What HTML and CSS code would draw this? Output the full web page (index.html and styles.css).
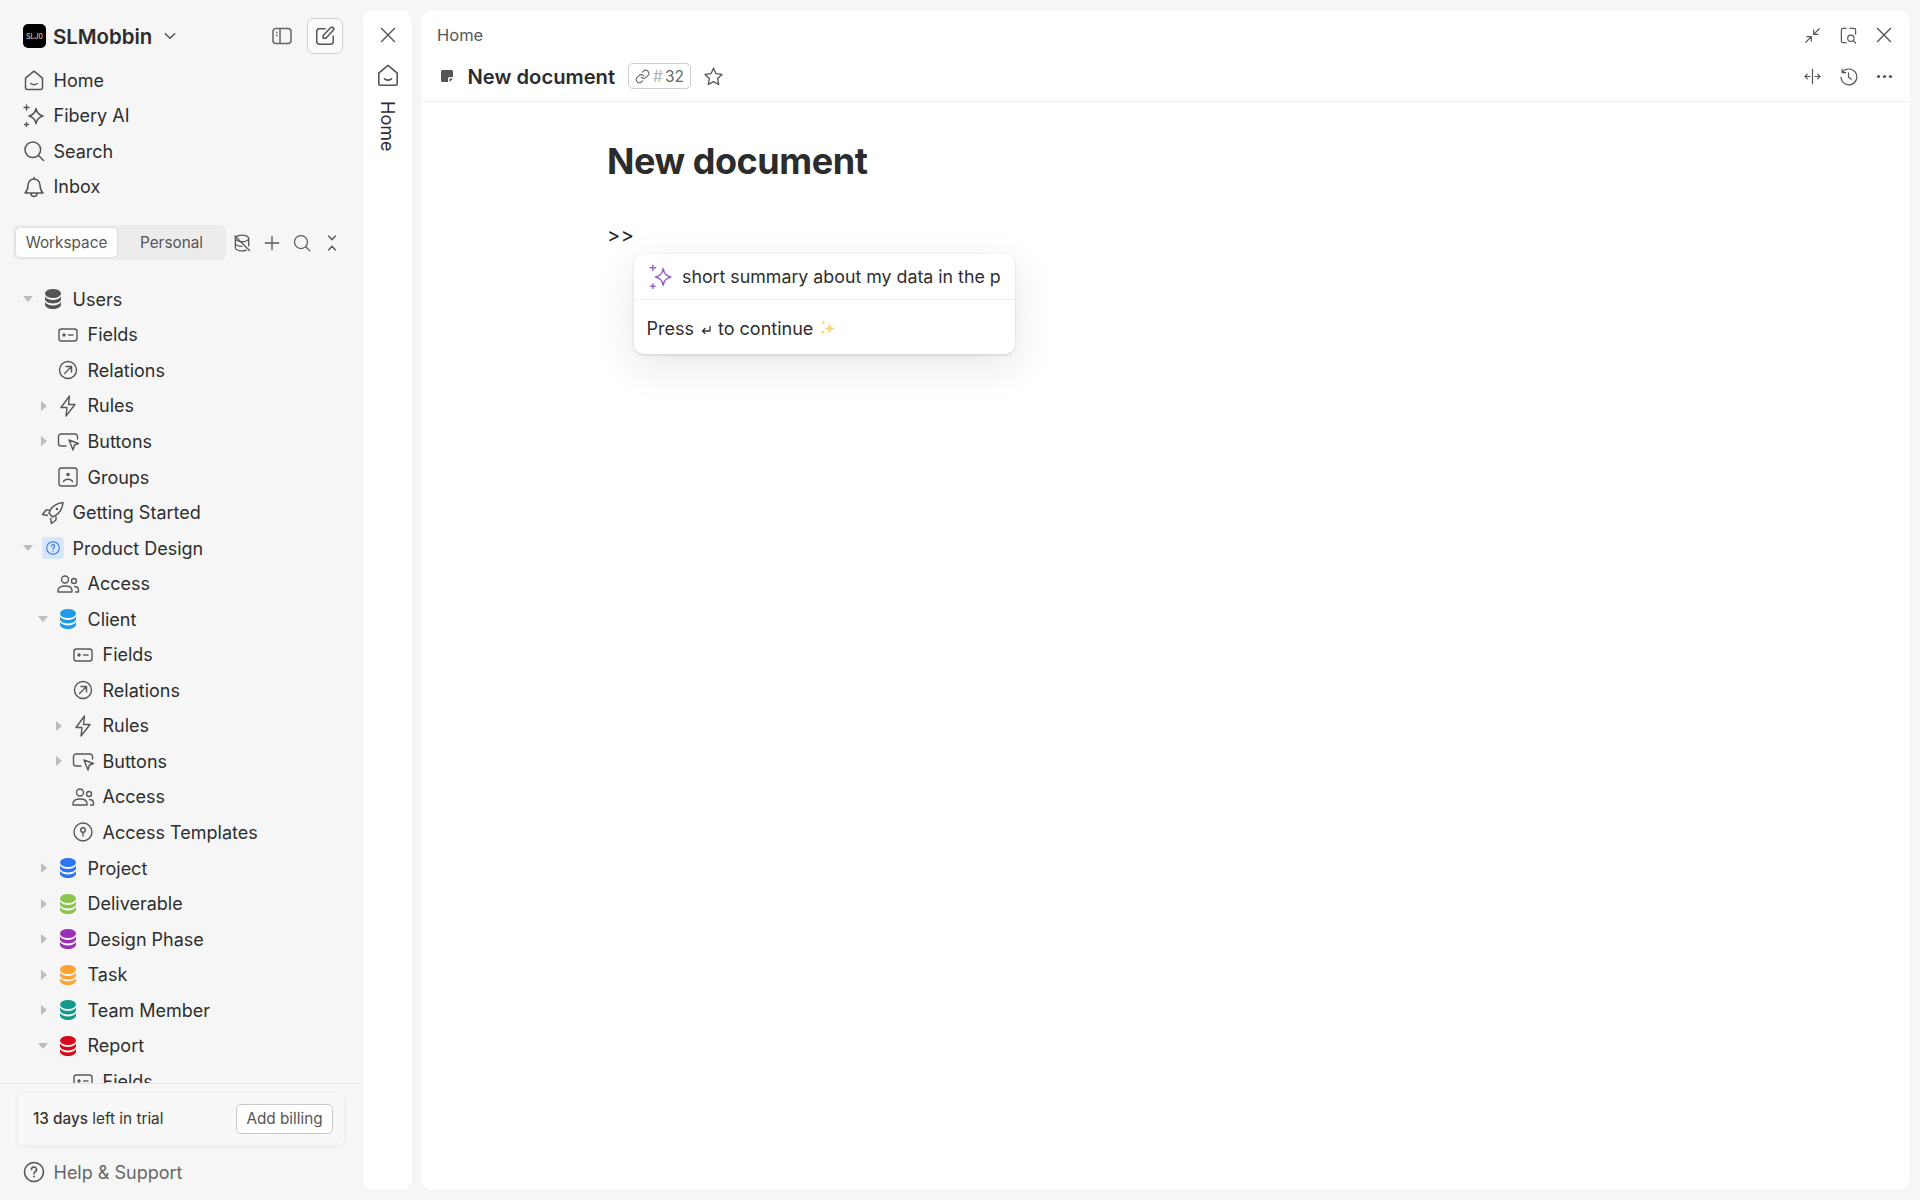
FILE: index.html
```html
<!DOCTYPE html>
<html lang="en">
<head>
<meta charset="utf-8">
<title>New document</title>
<link rel="stylesheet" href="styles.css">
</head>
<body>
<svg class="defs" xmlns="http://www.w3.org/2000/svg">
  <symbol id="i-home" viewBox="0 0 24 24"><path d="M3.500 10.200 12 3.200l8.500 7v9.300a2 2 0 0 1-2 2h-13a2 2 0 0 1-2-2z" fill="none" stroke="currentColor" stroke-width="1.500" stroke-linejoin="round"/><path d="M8.800 15.500c1.800 1.400 4.600 1.400 6.400 0" fill="none" stroke="currentColor" stroke-width="1.500" stroke-linecap="round"/></symbol>
  <symbol id="i-ai" viewBox="0 0 24 24"><path d="M14 4.500c.8 4.500 2.500 6.200 7 7.500-4.500 1.300-6.200 3-7 7.500-.8-4.500-2.500-6.200-7-7.500 4.500-1.300 6.200-3 7-7.500z" fill="none" stroke="currentColor" stroke-width="1.500" stroke-linejoin="round"/><path d="M4.500 1v5M2 3.500h5M4.500 18.500v4M2.500 20.500h4" stroke="currentColor" stroke-width="1.300" stroke-linecap="round"/></symbol>
  <symbol id="i-search" viewBox="0 0 24 24"><circle cx="10.800" cy="10.800" r="7.800" fill="none" stroke="currentColor" stroke-width="1.500"/><path d="m16.500 16.500 5 5" stroke="currentColor" stroke-width="1.500" stroke-linecap="round"/></symbol>
  <symbol id="i-bell" viewBox="0 0 24 24"><path d="M6 10a6 6 0 0 1 12 0c0 4 1 6 3 8H3c2-2 3-4 3-8zM12 2.500V4M9 18.500c0 4 6 4 6 0" fill="none" stroke="currentColor" stroke-width="1.500" stroke-linejoin="round" stroke-linecap="round"/></symbol>
  <symbol id="i-chev" viewBox="0 0 12 12"><path d="m2 4 4 4 4-4" fill="none" stroke="currentColor" stroke-width="1.300" stroke-linecap="round" stroke-linejoin="round"/></symbol>
  <symbol id="i-panel" viewBox="0 0 24 24"><rect x="3" y="4.500" width="18" height="15" rx="3" fill="none" stroke="currentColor" stroke-width="1.500"/><path d="M10 4.500v15" stroke="currentColor" stroke-width="1.500"/><path d="M6 8.500h1.500M6 11.500h1.500" stroke="currentColor" stroke-width="1.500"/></symbol>
  <symbol id="i-edit" viewBox="0 0 24 24"><path d="M12 4H6a3 3 0 0 0-3 3v11a3 3 0 0 0 3 3h12a3 3 0 0 0 3-3v-6" fill="none" stroke="currentColor" stroke-width="1.600" stroke-linecap="round"/><path d="M10 14.500v-3l8-8.500a1.800 1.800 0 0 1 3 2.800l-8 8.700z" fill="none" stroke="currentColor" stroke-width="1.600" stroke-linejoin="round"/></symbol>
  <symbol id="i-x" viewBox="0 0 24 24"><path d="m5 5 14 14M19 5 5 19" stroke="currentColor" stroke-width="1.500" stroke-linecap="round"/></symbol>
  <symbol id="i-dboff" viewBox="0 0 24 24"><ellipse cx="12" cy="6.500" rx="8" ry="4" fill="none" stroke="currentColor" stroke-width="1.600"/><path d="M4 6.500v11c0 2.300 3.600 4 8 4 2 0 3.800-.3 5-1M20 6.500v9M4 12c0 2.300 3.600 4 8 4M3.500 3.500l17.500 17.500" fill="none" stroke="currentColor" stroke-width="1.600" stroke-linecap="round"/></symbol>
  <symbol id="i-plus" viewBox="0 0 24 24"><path d="M12 4v16M4 12h16" stroke="currentColor" stroke-width="1.600" stroke-linecap="round"/></symbol>
  <symbol id="i-collapse" viewBox="0 0 24 24"><path d="m8 3.500 4 4.500 4-4.500M8 20.500 12 16l4 4.500" fill="none" stroke="currentColor" stroke-width="1.700" stroke-linecap="round" stroke-linejoin="round"/></symbol>
  <symbol id="i-db" viewBox="0 0 24 24"><ellipse cx="12" cy="6.500" rx="8" ry="4.500" fill="currentColor"/><path d="M4 9.500v2.600c0 2.500 3.600 4.400 8 4.400s8-1.900 8-4.400V9.500c-1.300 2.300-4.300 3.400-8 3.400s-6.700-1.100-8-3.400z" fill="currentColor"/><path d="M4 15v2.500c0 2.500 3.600 4.500 8 4.500s8-2 8-4.500V15c-1.300 2.300-4.300 3.400-8 3.400S5.300 17.300 4 15z" fill="currentColor"/></symbol>
  <symbol id="i-fields" viewBox="0 0 24 24"><rect x="3" y="6" width="18" height="12" rx="2.500" fill="none" stroke="currentColor" stroke-width="1.400"/><circle cx="8" cy="12" r="1.700" fill="currentColor"/><path d="M12 12h5.500" stroke="currentColor" stroke-width="1.400"/></symbol>
  <symbol id="i-rel" viewBox="0 0 24 24"><circle cx="12" cy="12" r="8.500" fill="none" stroke="currentColor" stroke-width="1.400"/><path d="m8.500 15.500 7-7M10 8.500h5.500V14" fill="none" stroke="currentColor" stroke-width="1.400" stroke-linecap="round" stroke-linejoin="round"/></symbol>
  <symbol id="i-bolt" viewBox="0 0 24 24"><path d="M13.500 2 5 13.500h6L10 22l9-11.500h-6.500z" fill="none" stroke="currentColor" stroke-width="1.400" stroke-linejoin="round"/></symbol>
  <symbol id="i-btn" viewBox="0 0 24 24"><path d="M10 17H5a2.500 2.500 0 0 1-2.500-2.500v-7A2.500 2.500 0 0 1 5 5h14a2.500 2.500 0 0 1 2.500 2.500V10" fill="none" stroke="currentColor" stroke-width="1.400" stroke-linecap="round"/><path d="m13 11 9.500 3.500-4 1.500-1.500 5z" fill="none" stroke="currentColor" stroke-width="1.400" stroke-linejoin="round"/></symbol>
  <symbol id="i-group" viewBox="0 0 24 24"><rect x="3" y="3" width="18" height="18" rx="2.500" fill="none" stroke="currentColor" stroke-width="1.400"/><circle cx="12" cy="9.500" r="1.800" fill="currentColor"/><path d="M7.500 16.500c1.500-3 7.500-3 9 0" fill="none" stroke="currentColor" stroke-width="1.400" stroke-linecap="round"/></symbol>
  <symbol id="i-rocket" viewBox="0 0 24 24"><path d="M8 12c2-6 6-9.500 14-10.500-.8 8-4 12-10.500 14.500z" fill="none" stroke="currentColor" stroke-width="1.500" stroke-linejoin="round"/><path d="M8.500 9H5L1.500 13.500 7 14.500M15 15.500V19l-4.500 3.500L9.500 17" fill="none" stroke="currentColor" stroke-width="1.500" stroke-linejoin="round"/><circle cx="16" cy="8" r="1.300" fill="currentColor"/></symbol>
  <symbol id="i-q" viewBox="0 0 24 24"><circle cx="12" cy="12" r="9.500" fill="none" stroke="currentColor" stroke-width="1.600"/><path d="M9.500 9.500a2.500 2.500 0 1 1 3.700 2.200c-.8.500-1.200 1-1.200 2" fill="none" stroke="currentColor" stroke-width="1.600" stroke-linecap="round"/><circle cx="12" cy="16.600" r="1" fill="currentColor"/></symbol>
  <symbol id="i-users" viewBox="0 0 24 24"><circle cx="9" cy="7.500" r="3.500" fill="none" stroke="currentColor" stroke-width="1.400"/><circle cx="18" cy="9" r="2.500" fill="none" stroke="currentColor" stroke-width="1.400"/><path d="M2 20v-1.500c0-3 3-4.500 7-4.500s7 1.500 7 4.500V20zM18 14.500c2.500 0 4.500 1.200 4.500 3.500v2H19" fill="none" stroke="currentColor" stroke-width="1.400" stroke-linejoin="round"/></symbol>
  <symbol id="i-tmpl" viewBox="0 0 24 24"><circle cx="12" cy="12" r="9" fill="none" stroke="currentColor" stroke-width="1.400"/><circle cx="12" cy="10" r="2.300" fill="none" stroke="currentColor" stroke-width="1.400"/><path d="M12 12.500V16" stroke="currentColor" stroke-width="1.400" stroke-linecap="round"/></symbol>
  <symbol id="i-doc" viewBox="0 0 14 14"><path d="M2.500 1h9A1.500 1.500 0 0 1 13 2.500V8H9.500A1.500 1.500 0 0 0 8 9.500V13H2.500A1.500 1.500 0 0 1 1 11.500v-9A1.500 1.500 0 0 1 2.500 1zM9.500 13V9.500H13z" fill="currentColor"/></symbol>
  <symbol id="i-link" viewBox="0 0 24 24"><path d="M10 13a5 5 0 0 0 7.540.54l3-3a5 5 0 0 0-7.070-7.070l-1.720 1.710M14 11a5 5 0 0 0-7.540-.54l-3 3a5 5 0 0 0 7.070 7.070l1.710-1.710" fill="none" stroke="currentColor" stroke-width="1.700" stroke-linecap="round" stroke-linejoin="round"/></symbol>
  <symbol id="i-star" viewBox="0 0 24 24"><path d="m12 2.500 2.900 6.300 6.800.8-5 4.700 1.300 6.900-6-3.400-6 3.400 1.300-6.900-5-4.700 6.800-.8z" fill="none" stroke="currentColor" stroke-width="1.500" stroke-linejoin="round"/></symbol>
  <symbol id="i-shrink" viewBox="0 0 24 24"><path d="m3.500 20.500 6.500-6.500M5 13.500h5.500V19M20.500 3.500 14 10M19 10.500h-5.500V5" fill="none" stroke="currentColor" stroke-width="1.500" stroke-linecap="round" stroke-linejoin="round"/></symbol>
  <symbol id="i-find" viewBox="0 0 24 24"><path d="M9 3H5a2 2 0 0 0-2 2v14a2 2 0 0 0 2 2h4M14 3h5a2 2 0 0 1 2 2v5" fill="none" stroke="currentColor" stroke-width="1.500" stroke-linecap="round"/><circle cx="15" cy="15.500" r="4" fill="none" stroke="currentColor" stroke-width="1.500"/><path d="m18 18.500 3 3" stroke="currentColor" stroke-width="1.500" stroke-linecap="round"/></symbol>
  <symbol id="i-split" viewBox="0 0 24 24"><path d="M12 3v18M9 12H2.500M5.500 9l-3 3 3 3M15 12h6.500M18.500 9l3 3-3 3" fill="none" stroke="currentColor" stroke-width="1.500" stroke-linecap="round" stroke-linejoin="round"/></symbol>
  <symbol id="i-hist" viewBox="0 0 24 24"><path d="M4.500 6.500A10 10 0 1 1 2.500 13M4 2.500v4.500h4.500" fill="none" stroke="currentColor" stroke-width="1.500" stroke-linecap="round" stroke-linejoin="round"/><path d="M12 7.500V13l3.500 2.500" fill="none" stroke="currentColor" stroke-width="1.500" stroke-linecap="round" stroke-linejoin="round"/></symbol>
  <symbol id="i-dots" viewBox="0 0 24 24"><circle cx="4.500" cy="12" r="2" fill="currentColor"/><circle cx="12" cy="12" r="2" fill="currentColor"/><circle cx="19.500" cy="12" r="2" fill="currentColor"/></symbol>
  <symbol id="i-ret" viewBox="0 0 12 12"><path d="M10 2.500V7H2.500M5 4.500 2.500 7 5 9.500" fill="none" stroke="currentColor" stroke-width="1.300" stroke-linecap="round" stroke-linejoin="round"/></symbol>
  <symbol id="i-glint" viewBox="0 0 16 16"><path d="M9.500 3c.5 3.500 1.700 4.700 5.500 5.500-3.800.8-5 2-5.500 5.500-.5-3.500-1.700-4.700-5.500-5.500C7.800 7.700 9 6.500 9.500 3z" fill="#f9dc7a"/><path d="M3.500 9.500c.2 1.500.8 2 2 2.300-1.200.3-1.800.8-2 2.200-.2-1.400-.8-1.900-2-2.200 1.200-.3 1.800-.8 2-2.300zM4 1c.2 1.200.6 1.700 1.700 2C4.600 3.300 4.200 3.800 4 5c-.2-1.200-.6-1.700-1.700-2C3.400 2.700 3.800 2.200 4 1z" fill="#f4cf68"/></symbol>
</svg>

<div class="app">
  <aside class="sidebar">
    <header class="brand">
      <span class="logo">SLJ0</span>
      <span class="brand-name">SLMobbin</span>
      <svg class="ic-chev"><use href="#i-chev"/></svg>
      <span class="spacer"></span>
      <svg class="ic-panel"><use href="#i-panel"/></svg>
      <button class="edit"><svg class="ic-edit"><use href="#i-edit"/></svg></button>
    </header>

    <nav class="nav">
      <a class="nav-row"><svg class="nav-ic"><use href="#i-home"/></svg>Home</a>
      <a class="nav-row"><svg class="nav-ic"><use href="#i-ai"/></svg>Fibery AI</a>
      <a class="nav-row"><svg class="nav-ic"><use href="#i-search"/></svg>Search</a>
      <a class="nav-row"><svg class="nav-ic"><use href="#i-bell"/></svg>Inbox</a>
    </nav>

    <div class="tabs-bar">
      <div class="tabs"><span class="tab active">Workspace</span><span class="tab">Personal</span></div>
      <svg class="tool"><use href="#i-dboff"/></svg>
      <svg class="tool"><use href="#i-plus"/></svg>
      <svg class="tool"><use href="#i-search"/></svg>
      <svg class="tool"><use href="#i-collapse"/></svg>
    </div>

    <div class="tree">
      <div class="row l0"><i class="caret down"></i><svg class="ti c-grey"><use href="#i-db"/></svg>Users</div>
      <div class="row l1"><i class="caret"></i><svg class="ti"><use href="#i-fields"/></svg>Fields</div>
      <div class="row l1"><i class="caret"></i><svg class="ti"><use href="#i-rel"/></svg>Relations</div>
      <div class="row l1"><i class="caret right"></i><svg class="ti"><use href="#i-bolt"/></svg>Rules</div>
      <div class="row l1"><i class="caret right"></i><svg class="ti"><use href="#i-btn"/></svg>Buttons</div>
      <div class="row l1"><i class="caret"></i><svg class="ti"><use href="#i-group"/></svg>Groups</div>
      <div class="row l0"><i class="caret"></i><svg class="ti"><use href="#i-rocket"/></svg>Getting Started</div>
      <div class="row l0"><i class="caret down"></i><span class="ti-box"><svg class="ti-q"><use href="#i-q"/></svg></span>Product Design</div>
      <div class="row l1"><i class="caret"></i><svg class="ti"><use href="#i-users"/></svg>Access</div>
      <div class="row l1"><i class="caret down"></i><svg class="ti c-client"><use href="#i-db"/></svg>Client</div>
      <div class="row l2"><i class="caret"></i><svg class="ti"><use href="#i-fields"/></svg>Fields</div>
      <div class="row l2"><i class="caret"></i><svg class="ti"><use href="#i-rel"/></svg>Relations</div>
      <div class="row l2"><i class="caret right"></i><svg class="ti"><use href="#i-bolt"/></svg>Rules</div>
      <div class="row l2"><i class="caret right"></i><svg class="ti"><use href="#i-btn"/></svg>Buttons</div>
      <div class="row l2"><i class="caret"></i><svg class="ti"><use href="#i-users"/></svg>Access</div>
      <div class="row l2"><i class="caret"></i><svg class="ti"><use href="#i-tmpl"/></svg>Access Templates</div>
      <div class="row l1"><i class="caret right"></i><svg class="ti c-project"><use href="#i-db"/></svg>Project</div>
      <div class="row l1"><i class="caret right"></i><svg class="ti c-deliv"><use href="#i-db"/></svg>Deliverable</div>
      <div class="row l1"><i class="caret right"></i><svg class="ti c-phase"><use href="#i-db"/></svg>Design Phase</div>
      <div class="row l1"><i class="caret right"></i><svg class="ti c-task"><use href="#i-db"/></svg>Task</div>
      <div class="row l1"><i class="caret right"></i><svg class="ti c-team"><use href="#i-db"/></svg>Team Member</div>
      <div class="row l1"><i class="caret down"></i><svg class="ti c-report"><use href="#i-db"/></svg>Report</div>
      <div class="row l2"><i class="caret"></i><svg class="ti"><use href="#i-fields"/></svg>Fields</div>
    </div>

    <footer class="foot">
      <div class="trial">
        <span class="trial-text"><b>13 days</b> left in trial</span>
        <button class="billing">Add billing</button>
      </div>
      <a class="nav-row help"><svg class="nav-ic"><use href="#i-q"/></svg>Help &amp; Support</a>
    </footer>
  </aside>

  <section class="rail">
    <svg class="rail-x"><use href="#i-x"/></svg>
    <svg class="rail-home"><use href="#i-home"/></svg>
    <span class="rail-label">Home</span>
  </section>

  <main class="page">
    <header class="page-head">
      <div class="head-line">
        <span class="crumb">Home</span>
        <span class="spacer"></span>
        <span class="act"><svg class="act-ic"><use href="#i-shrink"/></svg></span>
        <span class="act"><svg class="act-ic"><use href="#i-find"/></svg></span>
        <span class="act"><svg class="act-ic act-x"><use href="#i-x"/></svg></span>
      </div>
      <div class="head-line">
        <svg class="doc-ic"><use href="#i-doc"/></svg>
        <span class="doc-title">New document</span>
        <span class="doc-id"><svg class="link-ic"><use href="#i-link"/></svg><span class="hash">#</span>32</span>
        <svg class="star"><use href="#i-star"/></svg>
        <span class="spacer"></span>
        <span class="act"><svg class="act-ic"><use href="#i-split"/></svg></span>
        <span class="act"><svg class="act-ic"><use href="#i-hist"/></svg></span>
        <span class="act"><svg class="act-ic"><use href="#i-dots"/></svg></span>
      </div>
    </header>
    <article class="doc">
      <h1 class="doc-h1">New document</h1>
      <p class="doc-line">&gt;&gt;</p>
      <div class="popup">
        <div class="popup-top">
          <svg class="popup-ai"><use href="#i-ai"/></svg>
          <span class="popup-q">short summary about my data in the page</span>
        </div>
        <div class="popup-bottom">Press <svg class="ret"><use href="#i-ret"/></svg> to continue <svg class="glint"><use href="#i-glint"/></svg></div>
      </div>
    </article>
  </main>
</div>
</body>
</html>
```

FILE: styles.css
```css
* { box-sizing: border-box; }
html, body { margin: 0; height: 100%; }
body {
  background: #f6f6f6;
  color: #2e2e2e;
  font-family: Inter, "Liberation Sans", sans-serif;
  font-size: 18px;
  overflow: hidden;
}
.defs { display: none; }
.spacer { flex: 1; }
.app { display: flex; height: 1200px; padding: 10px 10px 10px 0; }

/* Sidebar */
.sidebar {
  width: 363px;
  flex: none;
  display: flex;
  flex-direction: column;
  margin: -10px 0 -10px;
  padding-top: 18px;
}
.brand { display: flex; align-items: center; height: 36px; padding: 0 20px 0 23px; }
.logo {
  width: 23px; height: 24px;
  display: flex; align-items: center; justify-content: center;
  background: #000; color: #e4e4e4;
  border-radius: 5px;
  font-size: 7px;
}
.brand-name { margin-left: 7px; font-size: 20.400px; font-weight: 600; color: #2c2c2c; }
.ic-chev { width: 14px; height: 14px; margin-left: 11px; color: #555; }
.ic-panel { width: 24px; height: 24px; margin-right: 13px; color: #666; }
.edit {
  width: 36px; height: 36px; padding: 0;
  display: flex; align-items: center; justify-content: center;
  background: #fbfbfb;
  border: 1.500px solid #cfcfcf;
  border-radius: 7px;
}
.ic-edit { width: 22px; height: 22px; color: #555; }

.nav { margin-top: 8.250px; }
.nav-row { display: flex; align-items: center; height: 35.500px; padding-left: 22px; }
.nav-ic { width: 24px; height: 24px; margin-right: 7.500px; color: #555; }

.tabs-bar { display: flex; align-items: center; height: 35px; margin-top: 20.750px; padding-left: 13px; }
.tabs {
  display: flex; align-items: center;
  width: 213px; height: 35px; padding: 3px;
  margin-right: 1px;
  background: #ececec;
  border-radius: 6px;
  font-size: 15.300px; color: #555;
}
.tab { display: flex; align-items: center; justify-content: center; height: 29px; width: 101px; border-radius: 4px; }
.tab + .tab { width: 106px; padding-left: 3px; }
.tab.active { background: #fff; box-shadow: 0 0 2px rgba(0,0,0,.18); }
.tool { width: 20px; height: 20px; margin: 0 5px; color: #5a5a5a; }

.tree { flex: 1; min-height: 0; overflow: hidden; padding-top: 21.500px; width: 360px; border-bottom: 1px solid #e6e6e6; }
.row { display: flex; align-items: center; height: 35.560px; }
.l0 { padding-left: 20px; }
.l1 { padding-left: 35px; }
.l2 { padding-left: 50px; }
.caret { width: 16px; height: 16px; flex: none; position: relative; margin-right: 5px; }
.caret::before { content: ""; position: absolute; left: 50%; top: 50%; border-style: solid; border-color: transparent; }
.caret.down::before { margin: -3px 0 0 -5px; border-width: 6px 5px 0; border-top-color: #bdbdbd; }
.caret.right::before { margin: -5px 0 0 -2px; border-width: 5px 0 5px 6px; border-left-color: #bdbdbd; }
.ti { width: 24px; height: 24px; flex: none; margin-right: 7.500px; color: #585858; }
.ti-box {
  width: 22px; height: 22px; flex: none;
  display: flex; align-items: center; justify-content: center;
  margin: 0 8.500px 0 1px;
  background: #d9e7fb;
  border-radius: 4px;
  color: #2f73e0;
}
.ti-q { width: 16px; height: 16px; }
.c-grey { color: #555; }
.c-client { color: #1d9be5; }
.c-project { color: #2b76f0; }
.c-deliv { color: #8dc44e; }
.c-phase { color: #9c2fb5; }
.c-task { color: #ffa033; }
.c-team { color: #129a8c; }
.c-report { color: #d60a1c; }

.foot { flex: none; padding-bottom: 10px; }
.trial {
  display: flex; align-items: center; justify-content: space-between;
  height: 52px; margin: 9px 19px 10px 18px; padding: 0 11px 0 15px;
  background: #f8f8f8;
  border-radius: 6px;
  box-shadow: 0 1px 5px rgba(0,0,0,.07);
}
.trial-text { font-size: 15.300px; color: #333; }
.trial-text b { font-weight: 500; }
.billing {
  height: 30px; width: 97px; padding: 0;
  background: #fff;
  border: 1.500px solid #c9c9c9;
  border-radius: 5px;
  font: 15.300px Inter, "Liberation Sans", sans-serif;
  color: #555;
}
.help { color: #666; }

/* Rail */
.rail {
  width: 49px; flex: none;
  display: flex; flex-direction: column; align-items: center;
  background: #fff;
  border-radius: 10px;
  padding-top: 14px;
  margin-right: 9px;
  box-shadow: 0 0 2px rgba(0,0,0,.06);
}
.rail-x { width: 22px; height: 22px; color: #555; }
.rail-home { width: 26px; height: 26px; margin-top: 16px; color: #555; }
.rail-label { writing-mode: vertical-rl; margin-top: 13px; font-size: 18px; color: #2e2e2e; }

/* Page */
.page {
  flex: 1; min-width: 0;
  position: relative;
  background: #fff;
  border-radius: 10px;
  box-shadow: 0 0 2px rgba(0,0,0,.06);
}
.page-head { padding: 7px 8px 8px 16px; border-bottom: 1px solid #f1f1f1; height: 92px; }
.head-line { display: flex; align-items: center; height: 36px; margin-bottom: 5px; }
.crumb { font-size: 16.500px; color: #555; }
.act { width: 36px; height: 36px; display: flex; align-items: center; justify-content: center; color: #555; }
.act-ic { width: 19px; height: 19px; }
.act-x { width: 22px; height: 22px; }
.doc-ic { width: 14px; height: 14px; margin: 0 13.500px 0 3px; color: #555; }
.doc-title { font-size: 20.200px; font-weight: 600; color: #2c2c2c; }
.doc-id {
  display: flex; align-items: center;
  height: 26px; margin-left: 13px; padding: 0 6px;
  border: 1px solid #ccc;
  border-radius: 5px;
  font-size: 15.500px; color: #666;
}
.link-ic { width: 15px; height: 15px; margin-right: 3px; color: #666; }
.hash { color: #b5b5b5; margin-right: 2px; }
.star { width: 21px; height: 21px; margin-left: 12px; color: #555; }

.doc { position: relative; padding: 36px 0 0 186px; }
.doc-h1 { margin: 0; font-size: 36px; line-height: 46px; font-weight: 700; letter-spacing: -.45px; color: #2c2c2c; }
.doc-line { margin: 37px 0 0; line-height: 28px; letter-spacing: .5px; font-size: 20px; color: #222; }

.popup {
  position: absolute; left: 213px; top: 152px;
  width: 381px; height: 100px;
  background: #fff;
  border-radius: 10px;
  box-shadow: 0 12px 40px rgba(0,0,0,.10), 0 1px 3px rgba(0,0,0,.14);
}
.popup-top { display: flex; align-items: center; height: 46px; padding: 0 15px 0 14px; border-bottom: 1px solid #f0f0f0; }
.popup-ai { width: 26px; height: 26px; flex: none; margin-right: 8px; color: #9660cc; }
.popup-q { flex: 1; min-width: 0; overflow: hidden; white-space: nowrap; font-size: 17.800px; color: #2e2e2e; }
.popup-bottom { display: flex; align-items: center; gap: 6px; height: 54px; padding: 2px 0 0 12.500px; font-size: 18px; }
.ret { width: 12px; height: 12px; margin: 3px 0 0; color: #333; }
.glint { width: 18px; height: 18px; }
```
